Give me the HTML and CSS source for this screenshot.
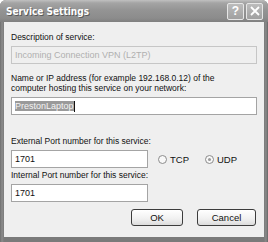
FILE: index.html
```html
<!DOCTYPE html>
<html>
<head>
<meta charset="utf-8">
<link rel="stylesheet" href="styles.css">
</head>
<body>
<div class="window">
  <div class="titlebar">
    <span class="title">Service Settings</span>
    <div class="tbtns">
      <div class="tbtn">?</div>
      <div class="tbtn close">
        <svg width="10" height="10" viewBox="0 0 10 10"><path d="M1 1L9 9M9 1L1 9" stroke="#fff" stroke-width="1.8"/></svg>
      </div>
    </div>
  </div>
  <div class="client">
    <div class="label first">Description of service:</div>
    <div class="field wide disabled">Incoming Connection VPN (L2TP)</div>
    <div class="label two">Name or IP address (for example 192.168.0.12) of the<br>computer hosting this service on your network:</div>
    <div class="field wide"><span class="sel">PrestonLaptop</span><span class="caret"></span></div>
    <div class="label ext">External Port number for this service:</div>
    <div class="row">
      <div class="field narrow">1701</div>
      <div class="radios">
        <span class="radio"><span class="circle"></span>TCP</span>
        <span class="radio"><span class="circle on"></span>UDP</span>
      </div>
    </div>
    <div class="label int">Internal Port number for this service:</div>
    <div class="field narrow">1701</div>
    <div class="buttons">
      <div class="btn ok">OK</div>
      <div class="btn cancel">Cancel</div>
    </div>
  </div>
</div>
</body>
</html>
```
FILE: styles.css
```css
html, body {
  margin: 0;
  padding: 0;
  background: #ffffff;
}
.window {
  width: 268px;
  height: 242px;
  box-sizing: border-box;
  background: linear-gradient(to right, #6e6e6e, #8c8c8c 2px, #7a7a7a 4px, #7a7a7a 264px, #8a8a8a 266px, #666 268px);
  display: flex;
  flex-direction: column;
  font-family: "Liberation Sans", Arial, sans-serif;
  font-size: 8.5px;
  color: #111;
  border-radius: 6px 6px 0 0;
  overflow: hidden;
}
.titlebar {
  height: 22px;
  flex: none;
  background: linear-gradient(to bottom, #c0c0c0 0px, #a4a4a4 3px, #949494 10px, #8c8c8c 18px, #808080 22px);
  display: flex;
  align-items: center;
  justify-content: space-between;
  padding: 0 5px 0 6px;
}
.title {
  font-family: "DejaVu Sans Condensed", "DejaVu Sans", sans-serif;
  font-weight: bold;
  font-size: 10px;
  color: #ffffff;
  text-shadow: 1px 1px 0 #5a5a5a;
  margin-top: 1px;
}
.tbtns {
  display: flex;
  gap: 2px;
}
.tbtn {
  width: 15px;
  height: 15px;
  border: 1px solid #e6e6e6;
  border-radius: 2px;
  background: linear-gradient(to bottom, #bcbcbc, #a0a0a0);
  color: #fff;
  font-family: "Liberation Sans", Arial, sans-serif;
  font-weight: bold;
  font-size: 12px;
  display: flex;
  align-items: center;
  justify-content: center;
}
.client {
  flex: 1;
  margin: 0 4px 5px 4px;
  background: #efefef;
  padding: 0 7px 0 7px;
  display: flex;
  flex-direction: column;
  align-items: flex-start;
}
.label {
  line-height: 10px;
  white-space: nowrap;
}
.label.first { margin-top: 10px; }
.label.two { margin-top: 9px; }
.label.ext { margin-top: 21px; }
.label.int { margin-top: 2px; }
.field {
  box-sizing: border-box;
  height: 18px;
  border: 1px solid #a4a4a4;
  background: #ffffff;
  padding: 0 3px;
  display: flex;
  align-items: center;
  margin-top: 4px;
  font-size: 9px;
}
.wide { width: 246px; }
.narrow { width: 137px; }
.disabled {
  background: #efefef;
  color: #b0b0b0;
  border-color: #c6c6c6;
}
.sel {
  background: #9a9a9a;
  color: #f4f4f4;
  line-height: 10px;
}
.caret {
  width: 1px;
  height: 11px;
  background: #111;
}
.row {
  display: flex;
  align-items: center;
}
.radios {
  display: flex;
  gap: 16px;
  margin-left: 10px;
  margin-top: 4px;
  font-size: 9.5px;
}
.radio {
  display: flex;
  align-items: center;
  gap: 3px;
}
.circle {
  width: 9px;
  height: 9px;
  box-sizing: border-box;
  border: 1px solid #8c8c8c;
  border-radius: 50%;
  background: #f8f8f8;
  position: relative;
}
.circle.on::after {
  content: "";
  position: absolute;
  left: 2px;
  top: 2px;
  width: 3px;
  height: 3px;
  border-radius: 50%;
  background: #9a9a9a;
}
.buttons {
  display: flex;
  gap: 14px;
  align-self: flex-end;
  margin-top: 7px;
  margin-right: 1px;
}
.btn {
  box-sizing: border-box;
  height: 17px;
  border: 1px solid #3c3c3c;
  border-radius: 3px;
  background: linear-gradient(to bottom, #ffffff, #f0f0f0 60%, #dcdcdc);
  display: flex;
  align-items: center;
  justify-content: center;
  font-size: 9.5px;
}
.ok { width: 52px; }
.cancel { width: 59px; }
```
